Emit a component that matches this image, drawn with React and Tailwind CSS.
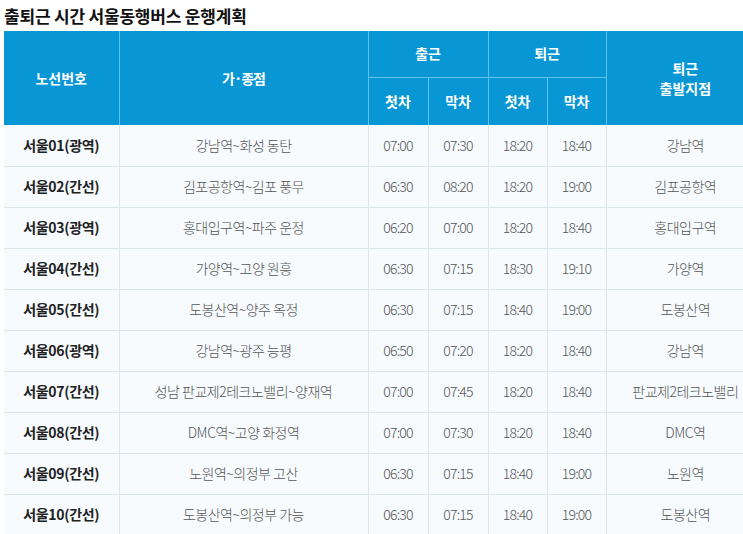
import React from 'react';

const rows = [
  ['서울01(광역)', '강남역~화성 동탄', '07:00', '07:30', '18:20', '18:40', '강남역'],
  ['서울02(간선)', '김포공항역~김포 풍무', '06:30', '08:20', '18:20', '19:00', '김포공항역'],
  ['서울03(광역)', '홍대입구역~파주 운정', '06:20', '07:00', '18:20', '18:40', '홍대입구역'],
  ['서울04(간선)', '가양역~고양 원흥', '06:30', '07:15', '18:30', '19:10', '가양역'],
  ['서울05(간선)', '도봉산역~양주 옥정', '06:30', '07:15', '18:40', '19:00', '도봉산역'],
  ['서울06(광역)', '강남역~광주 능평', '06:50', '07:20', '18:20', '18:40', '강남역'],
  ['서울07(간선)', '성남 판교제2테크노밸리~양재역', '07:00', '07:45', '18:20', '18:40', '판교제2테크노밸리'],
  ['서울08(간선)', 'DMC역~고양 화정역', '07:00', '07:30', '18:20', '18:40', 'DMC역'],
  ['서울09(간선)', '노원역~의정부 고산', '06:30', '07:15', '18:40', '19:00', '노원역'],
  ['서울10(간선)', '도봉산역~의정부 가능', '06:30', '07:15', '18:40', '19:00', '도봉산역'],
];

const font = { fontFamily: '"Noto Sans CJK KR", "Noto Sans", sans-serif' };

export default function App() {
  return (
    <div className="w-[743px] h-[534px] overflow-hidden bg-white" style={font}>
      {/* Title */}
      <h2 className="pl-[4px] pt-[3px] h-[31px] text-[17px] leading-[26px] font-bold text-[#111] tracking-[-0.2px]">
        출퇴근 시간 서울동행버스 운행계획
      </h2>

      <div className="pl-[4px]">
        <table className="w-[760px] border-collapse table-fixed text-[14px]">
          <colgroup>
            <col className="w-[115px]" />
            <col className="w-[249px]" />
            <col className="w-[60px]" />
            <col className="w-[60px]" />
            <col className="w-[59px]" />
            <col className="w-[59px]" />
            <col />
          </colgroup>
          <thead className="bg-[#0896d4] text-white font-bold">
            <tr className="h-[46px]">
              <th rowSpan={2} className="font-bold border-r border-[#5cc2ef]">노선번호</th>
              <th rowSpan={2} className="font-bold border-r border-[#5cc2ef] tracking-[-1px]">가·종점</th>
              <th colSpan={2} className="font-bold border-r border-b border-[#5cc2ef]">출근</th>
              <th colSpan={2} className="font-bold border-r border-b border-[#5cc2ef]">퇴근</th>
              <th rowSpan={2} className="font-bold leading-[20px]">
                <div>퇴근</div>
                <div>출발지점</div>
              </th>
            </tr>
            <tr className="h-[48px]">
              <th className="font-bold border-r border-[#5cc2ef]">첫차</th>
              <th className="font-bold border-r border-[#5cc2ef]">막차</th>
              <th className="font-bold border-r border-[#5cc2ef]">첫차</th>
              <th className="font-bold border-r border-[#5cc2ef]">막차</th>
            </tr>
          </thead>
          <tbody className="bg-[#f7fbfe]">
            {rows.map((r) => (
              <tr key={r[0]} className="h-[41px] border-b border-[#dbe5ec]">
                <td className="text-center font-bold text-[#222] border-r border-[#dbe5ec] tracking-[-0.3px]">{r[0]}</td>
                <td className="text-center font-light text-[#555] border-r border-[#dbe5ec] tracking-[-0.5px]">{r[1]}</td>
                <td className="text-center font-light text-[#555] border-r border-[#dbe5ec] tracking-[-0.8px]">{r[2]}</td>
                <td className="text-center font-light text-[#555] border-r border-[#dbe5ec] tracking-[-0.8px]">{r[3]}</td>
                <td className="text-center font-light text-[#555] border-r border-[#dbe5ec] tracking-[-0.8px]">{r[4]}</td>
                <td className="text-center font-light text-[#555] border-r border-[#dbe5ec] tracking-[-0.8px]">{r[5]}</td>
                <td className="text-center font-light text-[#555] tracking-[-0.5px]">{r[6]}</td>
              </tr>
            ))}
          </tbody>
        </table>
      </div>
    </div>
  );
}
